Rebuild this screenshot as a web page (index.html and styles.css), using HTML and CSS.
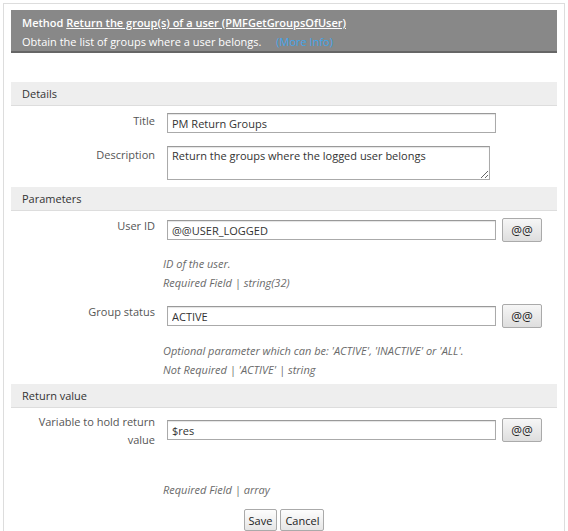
FILE: index.html
```html
<!DOCTYPE html>
<html>
<head>
<meta charset="utf-8">
<link rel="stylesheet" href="styles.css">
</head>
<body>
<div class="frame">
  <div class="header">
    <div class="header-title">Method <a class="header-link" href="#">Return the group(s) of a user (PMFGetGroupsOfUser)</a></div>
    <div class="header-desc">Obtain the list of groups where a user belongs. <a class="more" href="#">(More Info)</a></div>
  </div>

  <div class="bar bar-details">Details</div>
  <div class="row row-title">
    <div class="label">Title</div>
    <div class="field"><input class="input" type="text" value="PM Return Groups"></div>
  </div>
  <div class="row row-desc">
    <div class="label">Description</div>
    <div class="field"><textarea class="textarea">Return the groups where the logged user belongs</textarea></div>
  </div>

  <div class="bar bar-params">Parameters</div>
  <div class="row row-user">
    <div class="label">User ID</div>
    <div class="field field-btn"><input class="input" type="text" value="@@USER_LOGGED"><button class="at">@@</button></div>
  </div>
  <div class="help help-user">
    <div>ID of the user.</div>
    <div>Required Field | string(32)</div>
  </div>
  <div class="row row-group">
    <div class="label">Group status</div>
    <div class="field field-btn"><input class="input" type="text" value="ACTIVE"><button class="at">@@</button></div>
  </div>
  <div class="help help-group">
    <div>Optional parameter which can be: 'ACTIVE', 'INACTIVE' or 'ALL'.</div>
    <div>Not Required | 'ACTIVE' | string</div>
  </div>

  <div class="bar bar-return">Return value</div>
  <div class="row row-res">
    <div class="label">Variable to hold return value</div>
    <div class="field field-btn field-res"><input class="input" type="text" value="$res"><button class="at">@@</button></div>
  </div>
  <div class="help help-res">
    <div>&nbsp;</div>
    <div>Required Field | array</div>
  </div>

  <div class="actions">
    <button class="btn">Save</button>
    <button class="btn">Cancel</button>
  </div>
</div>
</body>
</html>
```
FILE: styles.css
```css
html { overflow: hidden; }
body {
  margin: 0;
  font-family: "Open Sans", "DejaVu Sans", sans-serif;
  font-size: 11px;
  color: #333;
  background: #fff;
}
.frame {
  margin: 3px 0 0 3px;
  width: 546px;
  border: 1px solid #ddd;
  border-bottom: none;
  padding: 6px 7px 20px 7px;
}
.header {
  background: #888;
  border-bottom: 2px solid #666;
  padding: 3px 11px 0 11px;
  height: 38px;
  color: #fff;
  line-height: 19px;
}
.header-title { font-weight: 600; }
.header-link { color: #fff; text-decoration: underline; }
.more { color: #42a5ea; text-decoration: none; margin-left: 12px; }

.bar {
  background: #eee;
  border-bottom: 1px solid #ddd;
  height: 23px;
  line-height: 23px;
  padding-left: 11px;
  color: #333;
}
.bar-details { margin-top: 29px; }
.bar-params { margin-top: 7px; }
.bar-return { margin-top: 5px; }

.row { display: flex; align-items: flex-start; }
.label {
  width: 144px;
  flex: none;
  text-align: right;
  color: #555;
  line-height: 18px;
}
.field { margin-left: 8px; display: flex; align-items: center; }
.input {
  box-sizing: border-box;
  width: 329px;
  height: 20px;
  margin: 1px 0 0 4px;
  border: 1px solid #aaa;
  border-top-color: #999;
  box-shadow: inset 0 1px 1px #e4e4e4;
  padding: 0 4px;
  font-family: "Open Sans", "DejaVu Sans", sans-serif;
  font-size: 11px;
  color: #333;
  outline: none;
}
.field-btn .input { margin-top: 0; }
.textarea {
  box-sizing: border-box;
  width: 323px;
  height: 34px;
  margin-left: 4px;
  border: 1px solid #aaa;
  border-top-color: #999;
  box-shadow: inset 0 1px 1px #e4e4e4;
  padding: 1px 4px;
  font-family: "Open Sans", "DejaVu Sans", sans-serif;
  font-size: 11px;
  line-height: 15px;
  color: #333;
  outline: none;
}
.at {
  box-sizing: border-box;
  width: 40px;
  height: 24px;
  margin-left: 6px;
  border: 1px solid #aaa;
  border-radius: 2px;
  background: linear-gradient(#f6f6f6, #dedede);
  font-family: "Open Sans", "DejaVu Sans", sans-serif;
  font-size: 12px;
  color: #222;
  padding: 0;
}
.row-title { margin-top: 6px; }
.row-desc { margin-top: 13px; }
.row-user { margin-top: 6px; }
.row-user .field, .row-group .field { margin-top: 1px; }
.row-group { margin-top: 11px; }
.row-res { margin-top: 5px; }
.field-res { margin-top: 5px; }

.help {
  margin-left: 152px;
  font-style: italic;
  color: #6a6a6a;
  line-height: 19px;
}
.help-user { margin-top: 12px; }
.help-group { margin-top: 13px; }
.help-res { margin-top: 12px; }

.actions {
  margin-top: 10px;
  display: flex;
  justify-content: center;
  gap: 3px;
}
.btn {
  height: 22px;
  border: 1px solid #aaa;
  border-radius: 2px;
  background: linear-gradient(#fdfdfd, #e6e6e6);
  font-family: "Open Sans", "DejaVu Sans", sans-serif;
  font-size: 11px;
  color: #222;
  padding: 0 4px;
}
```
